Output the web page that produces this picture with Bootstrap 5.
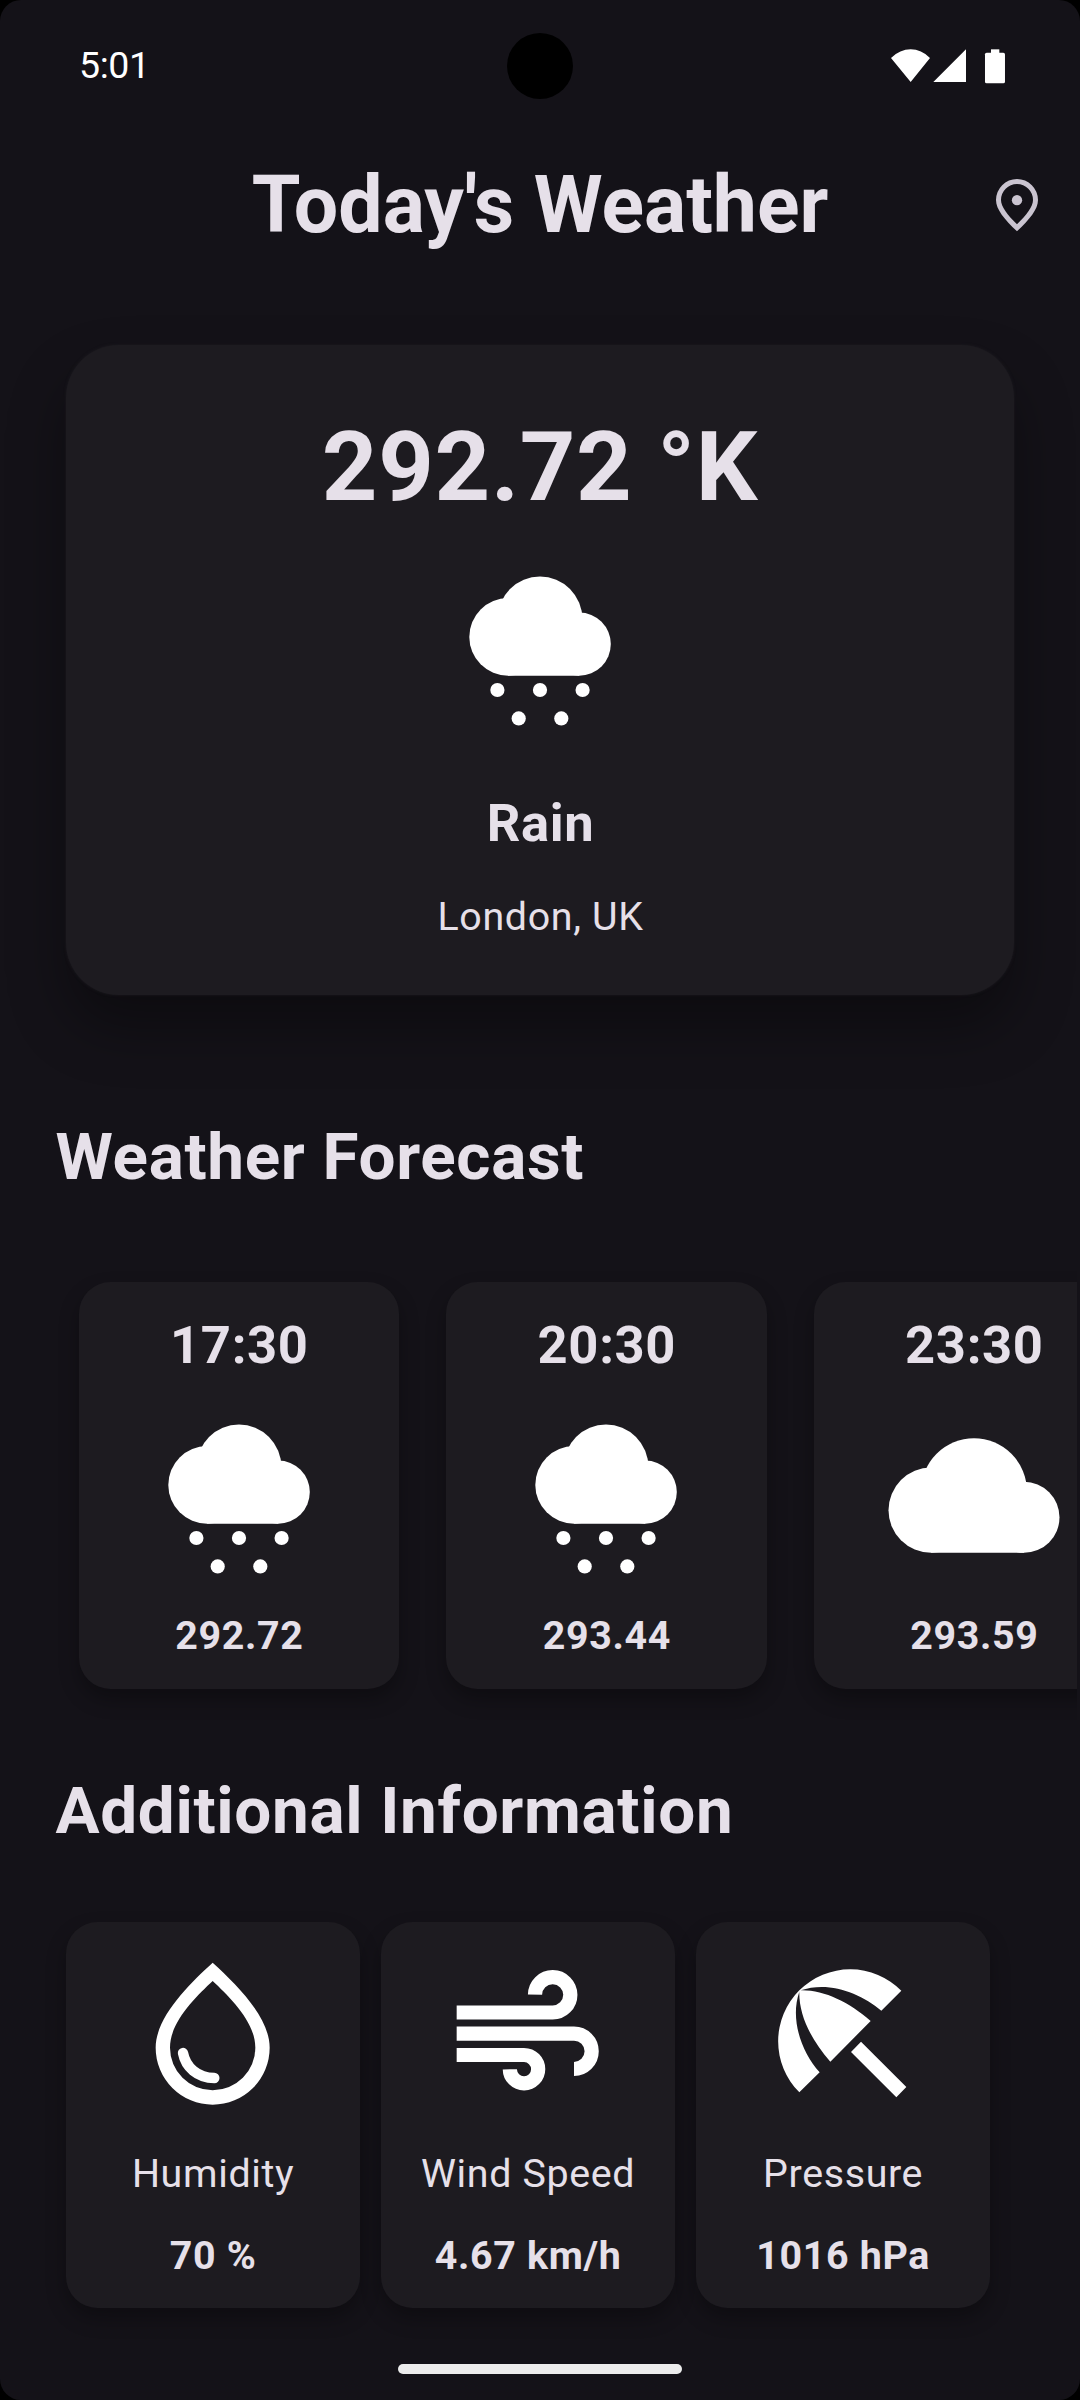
<!DOCTYPE html>
<html lang="en">
<head>
<meta charset="utf-8">
<meta name="viewport" content="width=device-width, initial-scale=1">
<title>Today's Weather</title>
<link href="https://cdn.jsdelivr.net/npm/bootstrap@5.3.0/dist/css/bootstrap.min.css" rel="stylesheet">
<style>
  body { background: #000; font-family: Roboto, "Noto Sans", sans-serif; color: #e6e0e9; }
  .screen { width: 1080px; height: 2400px; background: #141218; border-radius: 21px; }
  svg { display: block; flex: none; fill: #fff; }
  .status-bar { height: 132px; padding: 0 73px 0 79px; }
  .clock { color: #fff; font-size: 37.5px; letter-spacing: -.4px; line-height: 1; }
  .camera { width: 66px; height: 66px; top: 33px; left: 507px; }
  .app-bar { height: 145px; margin-bottom: 2px; padding-right: 39px; }
  .app-bar h1 { font-size: 78.75px; line-height: 100px; padding-left: 87px; }
  .app-bar svg { fill: #cac4d0; }
  .tile { --bs-card-bg: #1d1b20; --bs-card-color: #e6e0e9; --bs-card-border-width: 0; --bs-card-border-radius: 31.5px;
          flex: none; align-items: center; box-shadow: 0 10px 20px rgba(0,0,0,.3); letter-spacing: .66px; white-space: nowrap; }
  .tile.hero { --bs-card-border-radius: 52.5px; height: 650.5px; margin: 65.5px 65.6px 0; padding-top: 67.2px;
          box-shadow: 0 0 3px #1d1b20, 0 32px 56px rgba(0,0,0,.36); }
  .hero-temp { font-size: 97.1px; line-height: 110px; margin-bottom: 38.3px; }
  .t-mid { font-size: 52.5px; line-height: 60px; padding-left: 1px; }
  .t-small { font-size: 39.375px; line-height: 46px; padding-left: 1px; }
  .hero .t-mid { margin: 73.5px 0 40.5px; }
  .section-title { font-size: 65.625px; line-height: 76px; letter-spacing: .66px; padding-left: 55.5px; }
  .forecast-title { margin-top: 123.6px; }
  .extra-title { margin-top: 24.3px; }
  .forecast-list { gap: 47.25px; margin-right: 3px; padding: 87.4px 0 60px 78.75px; }
  .forecast-list .tile { width: 320.25px; height: 406.8px; padding-top: 33px; }
  .forecast-list svg { margin: 33px 0 45.3px; }
  .extra-list { gap: 21px; padding: 73.4px 0 0 65.6px; }
  .extra-list .tile { width: 294px; height: 385.6px; padding-top: 27.6px; }
  .extra-list svg { margin-bottom: 40.5px; }
  .extra-list .t-small + .t-small { margin-top: 36px; }
  .home-bar { width: 284px; height: 10px; background: #ececec; margin: 56px auto 0; }
</style>
<script src="https://cdn.jsdelivr.net/npm/bootstrap@5.3.0/dist/js/bootstrap.bundle.min.js"></script>
</head>
<body>
<svg class="d-none">
  <symbol id="rain" viewBox="450 560 180 170">
    <circle cx="508.1" cy="636.9" r="38.8"/><circle cx="540" cy="619" r="42.4"/><circle cx="579.2" cy="644.1" r="31.6"/>
    <path d="M508.1 636.9 503 600 540 592 582 613 579.2 675.7H508.1Z"/>
    <circle cx="497.4" cy="690" r="7.1"/><circle cx="540" cy="690" r="7.1"/><circle cx="582.6" cy="690" r="7.1"/>
    <circle cx="518.7" cy="718.4" r="7.1"/><circle cx="561.3" cy="718.4" r="7.1"/>
  </symbol>
  <symbol id="cloud" viewBox="883.6 1408 180 170">
    <circle cx="930.7" cy="1510.2" r="42.6"/><circle cx="973.6" cy="1491.2" r="52.9"/><circle cx="1023.6" cy="1517.3" r="35.5"/>
    <path d="M930.7 1510 926 1470 973 1460 1026 1483 1023.6 1552.8H930.7Z"/>
  </symbol>
</svg>

<div class="screen position-relative overflow-hidden d-flex flex-column">
  <div class="camera position-absolute rounded-circle bg-black"></div>
  <div class="status-bar d-flex justify-content-between align-items-center">
    <span class="clock">5:01</span>
    <svg width="116.67" height="38.33" viewBox="30 20 350 115">
      <path d="M92 125 33 53Q60 27 92 27T150 53ZM160 125 258 27V125Z"/>
      <rect x="315" y="37" width="60" height="92" rx="5"/><rect x="333" y="27" width="25" height="14"/>
    </svg>
  </div>

  <header class="app-bar d-flex align-items-center">
    <h1 class="flex-grow-1 text-center fw-bold mb-0">Today's Weather</h1>
    <svg width="48" height="58" viewBox="339 408 144 174">
      <path fill-rule="evenodd" d="M411 574C373 538 348 508 348 480A63 63 0 0 1 474 480C474 508 449 538 411 574ZM411 553C382 524 363 500 363 480A48 48 0 0 1 459 480C459 500 440 524 411 553Z"/>
      <circle cx="411" cy="480.500" r="15.500"/>
    </svg>
  </header>

  <main>
    <section class="card tile hero">
      <div class="hero-temp fw-bold">292.72 °K</div>
      <svg width="180" height="160" overflow="visible"><use href="#rain" width="180" height="170"/></svg>
      <div class="t-mid fw-bold">Rain</div>
      <div class="t-small">London, UK</div>
    </section>

    <h2 class="section-title forecast-title fw-bold mb-0">Weather Forecast</h2>
    <div class="forecast-list d-flex overflow-hidden">
      <div class="card tile">
        <div class="t-mid fw-bold">17:30</div>
        <svg width="180" height="160" overflow="visible"><use href="#rain" width="180" height="170"/></svg>
        <div class="t-small fw-bold">292.72</div>
      </div>
      <div class="card tile">
        <div class="t-mid fw-bold">20:30</div>
        <svg width="180" height="160" overflow="visible"><use href="#rain" width="180" height="170"/></svg>
        <div class="t-small fw-bold">293.44</div>
      </div>
      <div class="card tile">
        <div class="t-mid fw-bold">23:30</div>
        <svg width="180" height="160" overflow="visible"><use href="#cloud" width="180" height="170"/></svg>
        <div class="t-small fw-bold">293.59</div>
      </div>
    </div>

    <h2 class="section-title extra-title fw-bold mb-0">Additional Information</h2>
    <div class="extra-list d-flex">
      <div class="card tile">
        <svg width="160" height="160" viewBox="0 0 480 480">
          <path fill-rule="evenodd" d="M218 38C150 100 47 200 47 293A171 171 0 0 0 389 293C389 200 286 100 218 38ZM218 93C168 140 90 215 90 293A128 128 0 0 0 346 293C346 215 268 140 218 93Z" transform="translate(21 0)"/>
          <path d="M150 309C158 351 193 384 244 384" fill="none" stroke="#fff" stroke-width="31" stroke-linecap="round"/>
        </svg>
        <div class="t-small">Humidity</div>
        <div class="t-small fw-bold">70 %</div>
      </div>
      <div class="card tile">
        <svg width="180" height="160" viewBox="-6 0 540 480">
          <g fill="none" stroke="#fff" stroke-width="42.600"><path d="M50 187.500H338A53 53 0 1 0 285 134"/><path d="M50 251H402A53 53 0 0 1 402 357"/><path d="M50 315H252A42.500 42.500 0 1 1 209.500 358"/></g>
        </svg>
        <div class="t-small">Wind Speed</div>
        <div class="t-small fw-bold">4.67 km/h</div>
      </div>
      <div class="card tile">
        <svg width="160" height="160" viewBox="9 0 480 480">
          <path d="M118 121A216 216 0 0 1 424 122L364 182C300 128 205 92 122 121ZM118 121A216 216 0 0 0 118 427L179 367C125 308 89 208 118 125ZM118 121C190 118 265 155 332 213L211 335C152 268 115 193 118 121ZM303 275 439 411 409 442 273 306Z"/>
        </svg>
        <div class="t-small">Pressure</div>
        <div class="t-small fw-bold">1016 hPa</div>
      </div>
    </div>
  </main>
  <div class="home-bar rounded-pill"></div>
</div>
</body>
</html>
